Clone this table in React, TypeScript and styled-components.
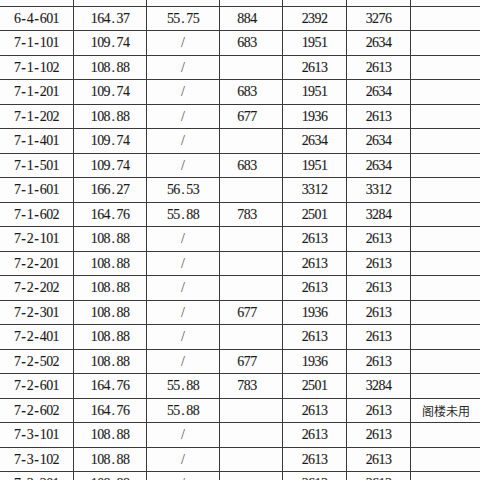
import React from "react";
import styled, { createGlobalStyle } from "styled-components";

const GlobalStyle = createGlobalStyle`
  html, body {
    margin: 0;
    padding: 0;
    background: #fdfdfd;
    overflow: hidden;
  }
`;

type Row = [string, string, string, string, string, string, string];

// the row above 6-4-601 is cut off by the top of the screenshot
const rows: Row[] = [
  ["6-4-502", "108.88", "/", "677", "1936", "2613", ""],
  ["6-4-601", "164.37", "55.75", "884", "2392", "3276", ""],
  ["7-1-101", "109.74", "/", "683", "1951", "2634", ""],
  ["7-1-102", "108.88", "/", "", "2613", "2613", ""],
  ["7-1-201", "109.74", "/", "683", "1951", "2634", ""],
  ["7-1-202", "108.88", "/", "677", "1936", "2613", ""],
  ["7-1-401", "109.74", "/", "", "2634", "2634", ""],
  ["7-1-501", "109.74", "/", "683", "1951", "2634", ""],
  ["7-1-601", "166.27", "56.53", "", "3312", "3312", ""],
  ["7-1-602", "164.76", "55.88", "783", "2501", "3284", ""],
  ["7-2-101", "108.88", "/", "", "2613", "2613", ""],
  ["7-2-201", "108.88", "/", "", "2613", "2613", ""],
  ["7-2-202", "108.88", "/", "", "2613", "2613", ""],
  ["7-2-301", "108.88", "/", "677", "1936", "2613", ""],
  ["7-2-401", "108.88", "/", "", "2613", "2613", ""],
  ["7-2-502", "108.88", "/", "677", "1936", "2613", ""],
  ["7-2-601", "164.76", "55.88", "783", "2501", "3284", ""],
  ["7-2-602", "164.76", "55.88", "", "2613", "2613", "阁楼未用"],
  ["7-3-101", "108.88", "/", "", "2613", "2613", ""],
  ["7-3-102", "108.88", "/", "", "2613", "2613", ""],
  ["7-3-201", "108.88", "/", "", "2613", "2613", ""],
];

const Viewport = styled.div`
  width: 480px;
  height: 480px;
  overflow: hidden;
`;

const Sheet = styled.div`
  display: grid;
  grid-template-columns: 73px 72px 72px 62px 63px 63px 80px;
  grid-auto-rows: 23.5px;
  gap: 1px;
  padding: 1px;
  margin: -19px 0 0 -1px;
  width: max-content;
  background: #3a3a3a;
`;

const Cell = styled.div<{ $nudge?: number }>`
  display: flex;
  align-items: center;
  justify-content: center;
  padding: 1px ${(p) => p.$nudge ?? 0}px 0 0;
  background: #fdfdfd;
  color: #1a1a1a;
  font-family: "Liberation Serif", "Times New Roman", serif;
  font-size: 14px;
  -webkit-text-stroke: 0.12px #1a1a1a;
  white-space: nowrap;
`;

// SimSun-like half-width glyphs: every character gets the same box
const Glyph = styled.span`
  display: inline-block;
  width: 0.46em;
  text-align: center;
`;

const Slash = styled.span`
  color: #4a4a4a;
  font-size: 14px;
  -webkit-text-stroke: 0;
`;

const Note = styled.span`
  font-family: "Noto Sans CJK SC", "Noto Sans", sans-serif;
  font-size: 12px;
  color: #2a2a2a;
  -webkit-text-stroke: 0;
  padding-right: 10px;
`;

function Mono({ text }: { text: string }) {
  if (text === "/") return <Slash>/</Slash>;
  return (
    <>
      {text.split("").map((ch, i) => (
        <Glyph key={i}>{ch}</Glyph>
      ))}
    </>
  );
}

export default function App() {
  return (
    <Viewport>
      <GlobalStyle />
      <Sheet>
        {rows.map((r) =>
          r.map((v, c) => (
            <Cell key={r[0] + c} $nudge={c === 3 ? 8 : 0}>
              {c === 6 ? v && <Note>{v}</Note> : <Mono text={v} />}
            </Cell>
          ))
        )}
      </Sheet>
    </Viewport>
  );
}
